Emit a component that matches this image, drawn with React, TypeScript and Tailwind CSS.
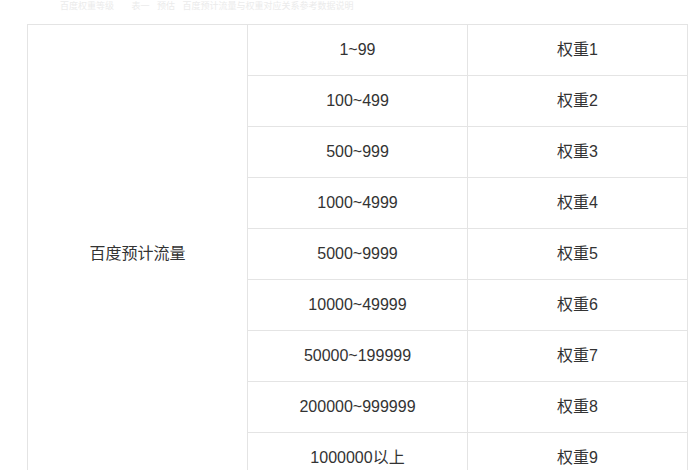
const rows = [
  { range: "1~99", weight: "权重1" },
  { range: "100~499", weight: "权重2" },
  { range: "500~999", weight: "权重3" },
  { range: "1000~4999", weight: "权重4" },
  { range: "5000~9999", weight: "权重5" },
  { range: "10000~49999", weight: "权重6" },
  { range: "50000~199999", weight: "权重7" },
  { range: "200000~999999", weight: "权重8" },
  { range: "1000000以上", weight: "权重9" },
];

export default function App() {
  return (
    <div
      className="w-[700px] h-[470px] overflow-hidden bg-white text-[#333333]"
      style={{ fontFamily: '"Liberation Sans", "Noto Sans CJK SC", sans-serif' }}
    >
      {/* faint caption above the table */}
      <div className="h-[24px] pl-[60px] pt-[1px]">
        <p className="text-[9px] leading-[10px] text-[#ebebeb] whitespace-nowrap">
          百度权重等级 &nbsp;&nbsp;&nbsp;&nbsp;&nbsp; 表一 &nbsp; 预估 &nbsp; 百度预计流量与权重对应关系参考数据说明
        </p>
      </div>

      <table className="ml-[27px] w-[661px] border-collapse text-[16px] text-center table-fixed">
        <tbody>
          {rows.map((r, i) => (
            <tr key={r.range} className="h-[51px]">
              {i === 0 && (
                <td rowSpan={9} className="w-[220px] border border-[#e4e4e4] align-middle">
                  百度预计流量
                </td>
              )}
              <td className="w-[220px] border border-[#e4e4e4]">{r.range}</td>
              <td className="border border-[#e4e4e4]">{r.weight}</td>
            </tr>
          ))}
        </tbody>
      </table>
    </div>
  );
}
